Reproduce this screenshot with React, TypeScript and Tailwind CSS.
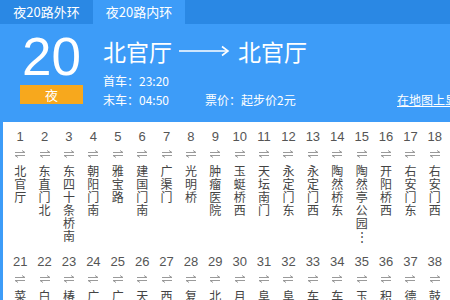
import React from "react";

const row1: [number, string][] = [
  [1, "北官厅"], [2, "东直门北"], [3, "东四十条桥南"], [4, "朝阳门南"], [5, "雅宝路"],
  [6, "建国门南"], [7, "广渠门"], [8, "光明桥"], [9, "肿瘤医院"], [10, "玉蜓桥西"],
  [11, "天坛南门"], [12, "永定门东"], [13, "永定门西"], [14, "陶然桥东"], [15, "陶然亭公园⋮"],
  [16, "开阳桥西"], [17, "右安门东"], [18, "右安门西"], [19, "菜户营"], [20, "菜户营桥"],
];
const row2: [number, string][] = [
  [21, "菜户营北"], [22, "白纸坊"], [23, "椿树街"], [24, "广安门内"], [25, "广安门外"],
  [26, "天宁寺"], [27, "西便门"], [28, "复兴门"], [29, "北礼士路"], [30, "月坛"],
  [31, "阜成门"], [32, "阜成门北"], [33, "车公庄"], [34, "车公庄北"], [35, "玉桃园"],
  [36, "积水潭"], [37, "德胜门"], [38, "鼓楼"], [39, "安德里"], [40, "地安门"],
];

const Harpoon = () => (
  <svg width="12" height="8" viewBox="0 0 12 8" fill="none" stroke="#9a9a9a" strokeWidth="1">
    <path d="M1 2.5H11L8 0.5" />
    <path d="M11 5.5H1L4 7.5" />
  </svg>
);

const Col = ({ n, name }: { n: number; name: string }) => (
  <div className="flex flex-col items-center">
    <div className="text-[13px] leading-[16px] text-[#555]" style={{ fontFamily: '"Liberation Sans", Arial, sans-serif' }}>{n}</div>
    <div className="mt-[3px] h-[12px] flex items-center"><Harpoon /></div>
    <div className="mt-[4px] flex flex-col items-center text-[12px] leading-[13px] text-[#444]">
      {Array.from(name).map((c, i) => (
        <span key={i} className="block">{c}</span>
      ))}
    </div>
  </div>
);

const Row = ({ items }: { items: [number, string][] }) => (
  <div className="grid grid-cols-[repeat(20,24.4px)] items-start">
    {items.map(([n, name]) => (
      <Col key={n} n={n} name={name} />
    ))}
  </div>
);

export default function App() {
  return (
    <div
      className="w-[450px] h-[300px] overflow-hidden bg-white"
      style={{ fontFamily: '"Noto Sans CJK SC", "Liberation Sans", sans-serif' }}
    >
      <div className="flex h-[24px] bg-[#2a88e4] text-[13px] text-white">
        <div className="w-[93px] flex items-center justify-center">夜20路外环</div>
        <div className="w-[92px] flex items-center justify-center bg-[#3d9cf8]">夜20路内环</div>
      </div>
      <div className="h-[98px] bg-[#3d9cf8] flex items-start pt-[6px] pl-[20px] text-white">
        <div className="w-[63px] flex flex-col items-center">
          <div className="text-[53px] leading-[53px]" style={{ fontFamily: '"Liberation Sans", Arial, sans-serif' }}>20</div>
          <div className="mt-[2px] w-[63px] h-[19px] bg-[#f7a81d] flex items-center justify-center text-[13px]">夜</div>
        </div>
        <div className="ml-[20px] mt-[6px] flex flex-col">
          <div className="flex items-center h-[30px] text-[23px]">
            <span>北官厅</span>
            <svg className="ml-[6px] mr-[8px]" width="52" height="12" viewBox="0 0 52 12" fill="none" stroke="white" strokeWidth="1.6">
              <path d="M1 6H50" />
              <path d="M44 1.5L50 6L44 10.5" />
            </svg>
            <span>北官厅</span>
          </div>
          <div className="text-[12px] leading-[19px] mt-[5px]">首车：23:20</div>
          <div className="flex text-[12px] leading-[19px]">
            <span className="w-[102px] shrink-0">末车：04:50</span>
            <span className="w-[192px] shrink-0">票价：起步价2元</span>
            <span className="underline whitespace-nowrap">在地图上显示</span>
          </div>
        </div>
      </div>
      <div className="border-l-[3px] border-[#3d9cf8] pl-[5px] pt-[7px] flex flex-col gap-[12px] w-[500px]">
        <Row items={row1} />
        <Row items={row2} />
      </div>
    </div>
  );
}
